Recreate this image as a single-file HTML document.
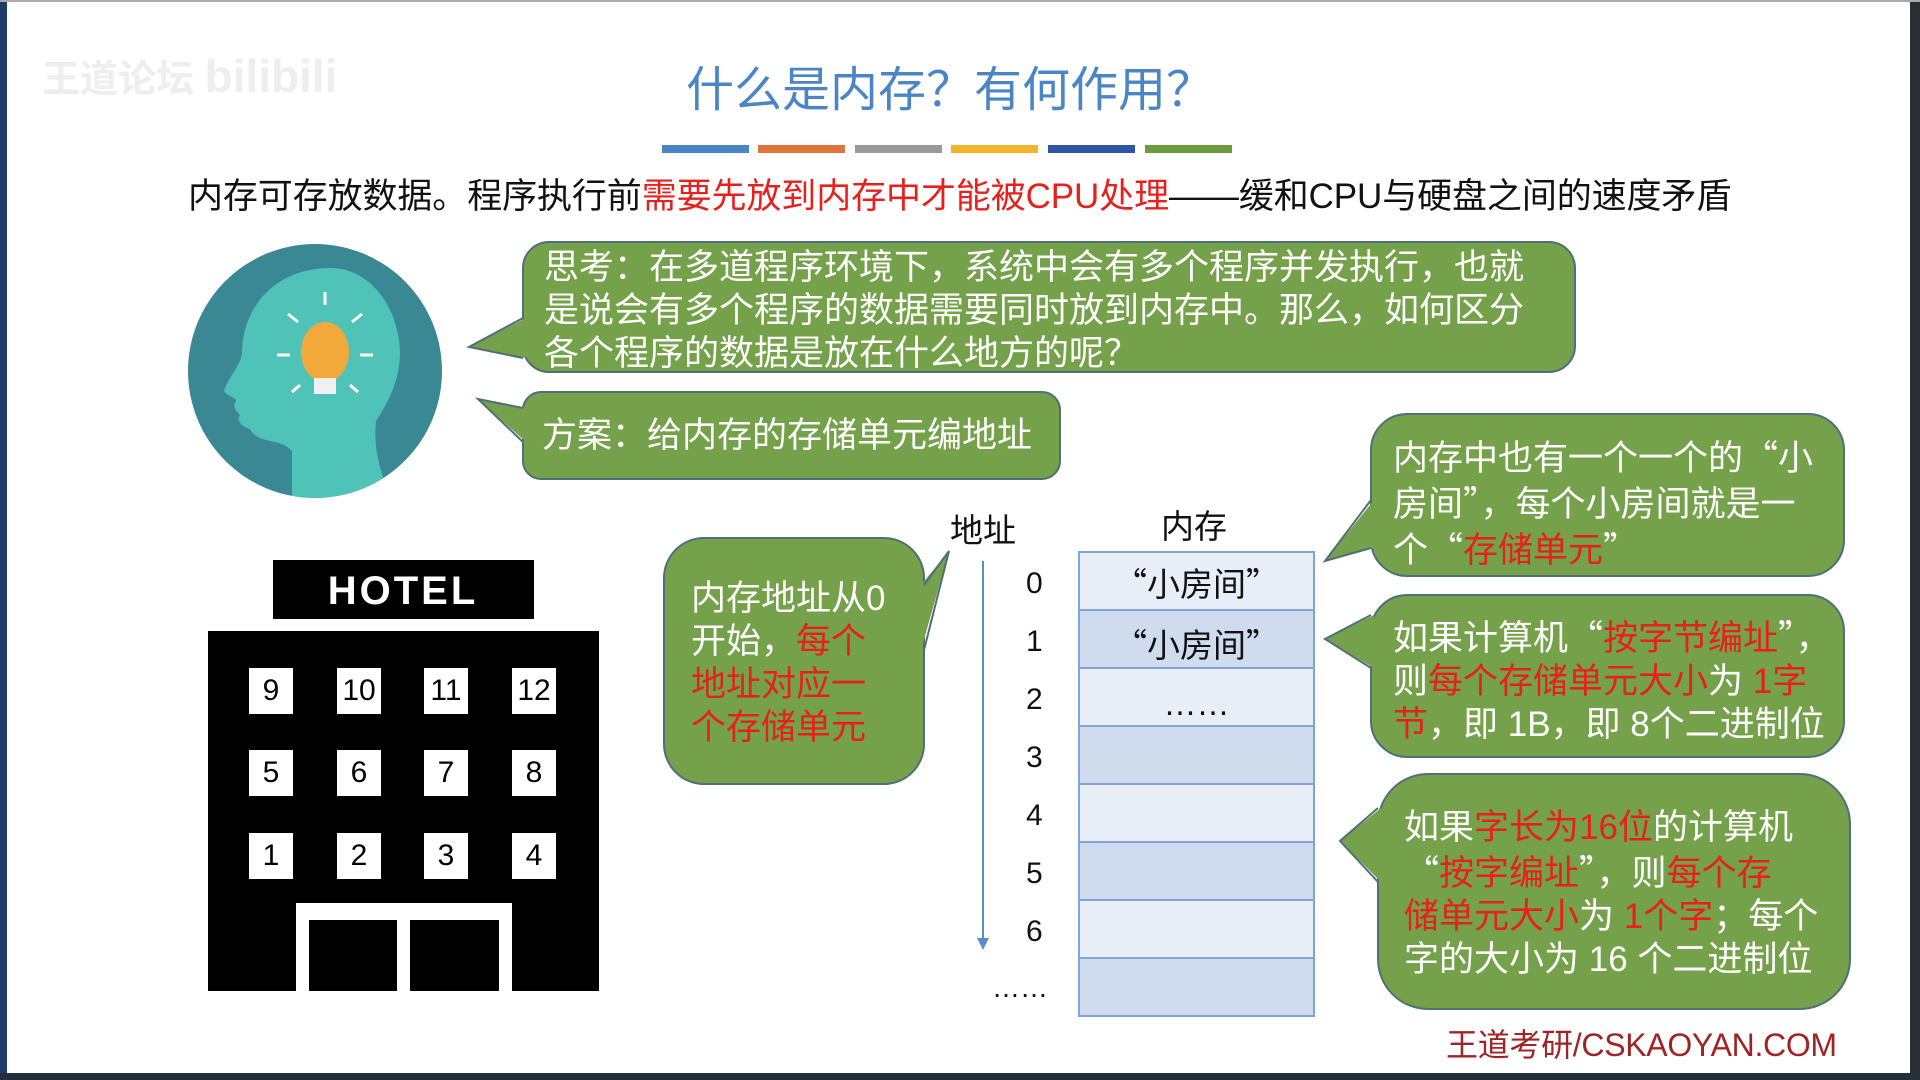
<!DOCTYPE html>
<html><head><meta charset="utf-8"><style>
*{margin:0;padding:0;box-sizing:border-box}
body{width:1920px;height:1080px;position:relative;overflow:hidden;background:#fff;font-family:"Liberation Sans","Noto Sans CJK SC",sans-serif}
.a{position:absolute;white-space:nowrap}
.t{font-size:35px;line-height:43px;color:#fff}
.r{color:#e8201c}
.q{font-family:"Noto Sans CJK SC",sans-serif}
.w{position:absolute;width:44px;height:46px;background:#fff;color:#000;font-size:30px;text-align:center;line-height:46px}
</style></head><body>
<div class="a" style="left:0;top:0;width:7px;height:1080px;background:#1d3a6a"></div>
<div class="a" style="left:1910px;top:0;width:10px;height:1080px;background:#2a2e33"></div>
<div class="a" style="left:0;top:1073px;width:1920px;height:7px;background:#23303c"></div>
<div class="a" style="left:0;top:0;width:1920px;height:2px;background:#aaa"></div>
<div class="a" style="left:42px;top:48px;font-size:38px;color:#eee;font-weight:bold">王道论坛 <span style="font-size:46px">bilibili</span></div>

<div class="a" style="left:0;width:1900px;top:50px;text-align:center;font-size:48px;color:#4a86c6">什么是内存？有何作用？</div>
<div class="a" style="left:662px;top:145px;width:87px;height:8px;background:#4a86c6"></div>
<div class="a" style="left:758px;top:145px;width:87px;height:8px;background:#e0743a"></div>
<div class="a" style="left:855px;top:145px;width:87px;height:8px;background:#9a9a9a"></div>
<div class="a" style="left:951px;top:145px;width:87px;height:8px;background:#f3b42c"></div>
<div class="a" style="left:1048px;top:145px;width:87px;height:8px;background:#2f56a4"></div>
<div class="a" style="left:1145px;top:145px;width:87px;height:8px;background:#6e9c3c"></div>

<div class="a" style="left:188px;top:175px;font-size:35px;line-height:44px;color:#111;letter-spacing:-0.1px">内存可存放数据。程序执行前<span class="r">需要先放到内存中才能被CPU处理</span>——缓和CPU与硬盘之间的速度矛盾</div>

<svg class="a" style="left:0;top:0" width="1920" height="1080">
<defs><clipPath id="c"><circle cx="315" cy="371" r="127"/></clipPath></defs>
<circle cx="315" cy="371" r="127" fill="#3a8893"/>
<path clip-path="url(#c)" d="M330 268c-55 0-88 40-88 85 0 10-14 25-18 38 4 6 12 6 12 10-4 6 0 10 4 14-4 6 2 12 10 14 8 16 30 8 42 22v70h110c-14-30-30-60-26-100 20-30 30-60 20-95-10-35-35-58-66-58z" fill="#4fc3b7"/>
<ellipse cx="325" cy="352" rx="24" ry="30" fill="#f2a93b"/>
<rect x="314" y="378" width="22" height="16" fill="#f0f0f0"/>
<g stroke="#fff" stroke-width="3"><line x1="325" y1="292" x2="325" y2="305"/><line x1="290" y1="355" x2="277" y2="355"/><line x1="360" y1="355" x2="373" y2="355"/><line x1="298" y1="322" x2="288" y2="314"/><line x1="352" y1="322" x2="362" y2="314"/><line x1="300" y1="385" x2="292" y2="392"/><line x1="350" y1="385" x2="358" y2="392"/></g>
<g fill="#74a14a" stroke="#4f6f7a" stroke-width="2">
<rect x="523" y="242" width="1052" height="130" rx="26"/>
<rect x="523" y="392" width="537" height="87" rx="18"/>
<rect x="664" y="538" width="260" height="246" rx="40"/>
<rect x="1371" y="414" width="473" height="162" rx="36"/>
<rect x="1371" y="595" width="473" height="162" rx="36"/>
<rect x="1378" y="774" width="472" height="235" rx="50"/>
</g>
<g fill="#74a14a">
<polygon points="469,347 526,318 526,358"/>
<polygon points="478,399 526,408 526,442"/>
<polygon points="949,551 921,585 921,650"/>
<polygon points="1325,561 1374,500 1374,548"/>
<polygon points="1325,639 1374,615 1374,668"/>
<polygon points="1340,841 1381,808 1381,882"/>
</g>
<g stroke="#4f6f7a" stroke-width="2" fill="none">
<polyline points="523,318 469,347 523,358"/>
<polyline points="523,408 478,399 523,442"/>
<polyline points="924,585 949,551 924,650"/>
<polyline points="1371,500 1325,561 1371,548"/>
<polyline points="1371,615 1325,639 1371,668"/>
<polyline points="1378,808 1340,841 1378,882"/>
</g>
<line x1="983" y1="561" x2="983" y2="940" stroke="#5b8ccc" stroke-width="2"/>
<polygon points="977,938 989,938 983,950" fill="#5b8ccc"/>
<g stroke="#7ea4d8" stroke-width="2">
<rect x="1079" y="552" width="235" height="58" fill="#e8eef8"/>
<rect x="1079" y="610" width="235" height="58" fill="#cfdcee"/>
<rect x="1079" y="668" width="235" height="58" fill="#e8eef8"/>
<rect x="1079" y="726" width="235" height="58" fill="#cfdcee"/>
<rect x="1079" y="784" width="235" height="58" fill="#e8eef8"/>
<rect x="1079" y="842" width="235" height="58" fill="#cfdcee"/>
<rect x="1079" y="900" width="235" height="58" fill="#e8eef8"/>
<rect x="1079" y="958" width="235" height="58" fill="#cfdcee"/>
</g>
<rect x="273" y="560" width="261" height="59" fill="#000"/>
<text x="403" y="604" font-family="Liberation Sans" font-size="40" font-weight="bold" fill="#fff" text-anchor="middle" letter-spacing="3">HOTEL</text>
<rect x="208" y="631" width="391" height="360" fill="#000"/>
<rect x="296" y="903" width="216" height="88" fill="#fff"/>
<rect x="309" y="920" width="88" height="71" fill="#000"/>
<rect x="410" y="920" width="89" height="71" fill="#000"/>
</svg>

<div class="w" style="left:249px;top:668px">9</div><div class="w" style="left:337px;top:668px">10</div><div class="w" style="left:424px;top:668px">11</div><div class="w" style="left:512px;top:668px">12</div>
<div class="w" style="left:249px;top:750px">5</div><div class="w" style="left:337px;top:750px">6</div><div class="w" style="left:424px;top:750px">7</div><div class="w" style="left:512px;top:750px">8</div>
<div class="w" style="left:249px;top:833px">1</div><div class="w" style="left:337px;top:833px">2</div><div class="w" style="left:424px;top:833px">3</div><div class="w" style="left:512px;top:833px">4</div>

<div class="a t" style="left:544px;top:246px">思考：在多道程序环境下，系统中会有多个程序并发执行，也就<br>是说会有多个程序的数据需要同时放到内存中。那么，如何区分<br>各个程序的数据是放在什么地方的呢？</div>
<div class="a t" style="left:542px;top:414px">方案：给内存的存储单元编地址</div>
<div class="a t" style="left:691px;top:577px">内存地址从0<br>开始，<span class="r">每个</span><br><span class="r">地址对应一</span><br><span class="r">个存储单元</span></div>

<div class="a" style="left:950px;top:504px;font-size:33px;color:#111">地址</div>
<div class="a" style="left:1161px;top:500px;font-size:33px;color:#111">内存</div>
<div class="a" style="left:1026px;top:555px;font-size:30px;line-height:58px;color:#111">0<br>1<br>2<br>3<br>4<br>5<br>6</div>
<div class="a" style="left:992px;top:972px;font-size:28px;color:#111">……</div>
<div class="a" style="left:1079px;top:553px;width:235px;text-align:center;font-size:33px;line-height:58px;color:#111"><span class="q">“</span>小房间<span class="q">”</span><br><span class="q">“</span>小房间<span class="q">”</span><br>……</div>

<div class="a t" style="left:1393px;top:434px">内存中也有一个一个的<span class="q">“</span>小<br>房间<span class="q">”</span>，每个小房间就是一<br>个<span class="q">“</span><span class="r">存储单元</span><span class="q">”</span></div>
<div class="a t" style="left:1393px;top:614px">如果计算机<span class="q">“</span><span class="r">按字节编址</span><span class="q">”</span>，<br>则<span class="r">每个存储单元大小</span>为 <span class="r">1字</span><br><span class="r">节</span>，即 1B，即 8个二进制位</div>
<div class="a t" style="left:1404px;top:806px">如果<span class="r">字长为16位</span>的计算机<br><span class="q">“</span><span class="r">按字编址</span><span class="q">”</span>，则<span class="r">每个存</span><br><span class="r">储单元大小</span>为 <span class="r">1个字</span>；每个<br>字的大小为 16 个二进制位</div>

<div class="a" style="left:1446px;top:1020px;font-size:32px;color:#a02426;letter-spacing:-0.3px">王道考研/CSKAOYAN.COM</div>
</body></html>
